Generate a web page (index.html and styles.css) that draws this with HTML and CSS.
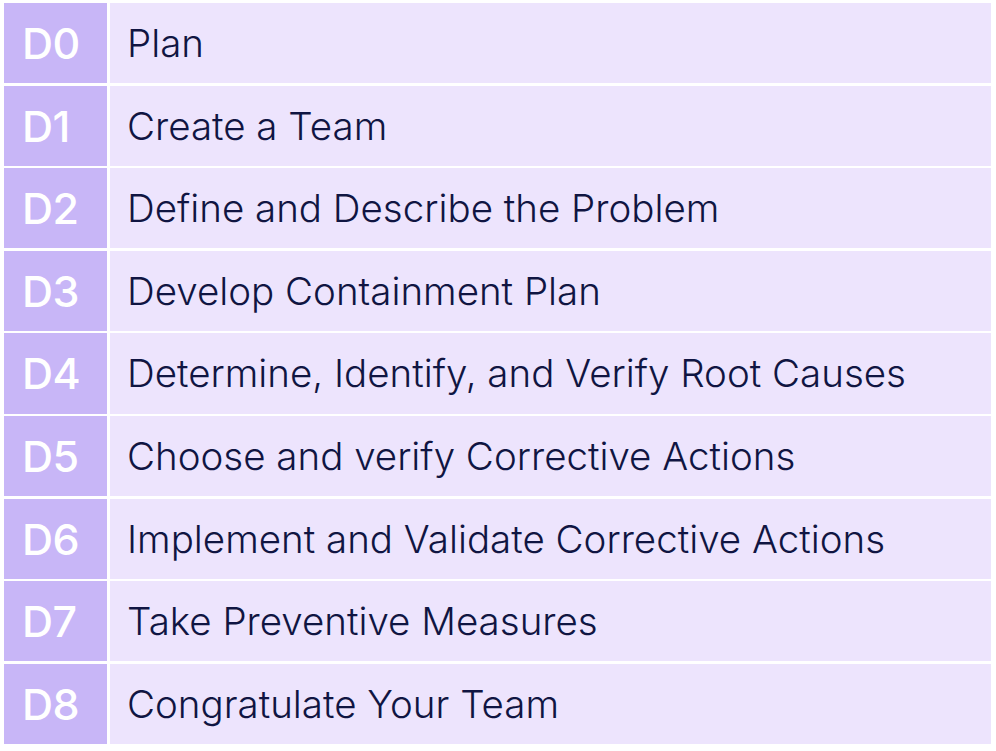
FILE: index.html
```html
<!DOCTYPE html>
<html>
<head>
<meta charset="utf-8">
<link rel="stylesheet" href="styles.css">
</head>
<body>
<div class="steps">
  <div class="code">D0</div><div class="label">Plan</div>
  <div class="code">D1</div><div class="label">Create a Team</div>
  <div class="code">D2</div><div class="label">Define and Describe the Problem</div>
  <div class="code">D3</div><div class="label">Develop Containment Plan</div>
  <div class="code">D4</div><div class="label">Determine, Identify, and Verify Root Causes</div>
  <div class="code">D5</div><div class="label">Choose and verify Corrective Actions</div>
  <div class="code">D6</div><div class="label">Implement and Validate Corrective Actions</div>
  <div class="code">D7</div><div class="label">Take Preventive Measures</div>
  <div class="code">D8</div><div class="label">Congratulate Your Team</div>
</div>
</body>
</html>
```
FILE: styles.css
```css
html, body {
  margin: 0;
  background: #ffffff;
}
.steps {
  margin: 3px 5px 0 4px;
  height: 741px;
  display: grid;
  grid-template-columns: 103px 1fr;
  grid-template-rows: repeat(9, 1fr);
  column-gap: 3px;
  row-gap: 2.4px;
}
.code {
  background: #c8b6f7;
  color: #ffffff;
  font-family: Inter, "Liberation Sans", sans-serif;
  font-weight: 500;
  font-size: 43px;
  letter-spacing: -0.5px;
  display: flex;
  align-items: center;
  padding-left: 18px;
}
.label {
  background: #ede4fd;
  color: #101542;
  font-family: Inter, "Liberation Sans", sans-serif;
  font-weight: 300;
  font-size: 38.5px;
  letter-spacing: 0;
  display: flex;
  align-items: center;
  padding-left: 17px;
}
```
